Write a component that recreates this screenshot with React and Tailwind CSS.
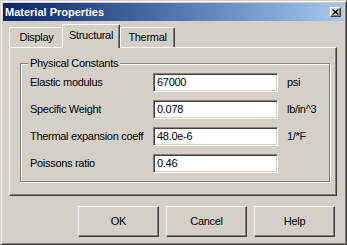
import React from "react";

const raised =
  "border border-t-white border-l-white border-r-[#404040] border-b-[#404040] shadow-[inset_-1px_-1px_#808080]";
const sunken =
  "border border-t-[#808080] border-l-[#808080] border-r-white border-b-white shadow-[inset_1px_1px_#404040,inset_-1px_-1px_#d4d0c8]";

const rows = [
  ["Elastic modulus", "67000", "psi"],
  ["Specific Weight", "0.078", "lb/in^3"],
  ["Thermal expansion coeff", "48.0e-6", "1/*F"],
  ["Poissons ratio", "0.46", ""],
];

export default function App() {
  return (
    <div className="w-[347px] h-[245px] bg-[#d4d0c8] border border-t-[#d4d0c8] border-l-[#d4d0c8] border-r-[#404040] border-b-[#404040] shadow-[inset_1px_1px_#fff,inset_-1px_-1px_#808080] p-[2px] flex flex-col font-['Liberation_Sans',Arial,sans-serif] text-[11px] tracking-[-0.3px] text-black leading-[13px]">
      {/* Title bar */}
      <div className="h-[18px] flex items-center justify-between bg-gradient-to-r from-[#0a246a] to-[#a6caf0] pl-[2px] pr-[3px]">
        <span className="text-white font-bold text-[11px] tracking-[0px]">Material Properties</span>
        <div className={`w-[11px] h-[10px] bg-[#d4d0c8] flex items-center justify-center ${raised}`}>
          <svg width="7" height="6" viewBox="0 0 7 6">
            <path d="M0.5 0.5 L6.5 5.5 M6.5 0.5 L0.5 5.5" stroke="#000" strokeWidth="1.2" />
          </svg>
        </div>
      </div>

      {/* Tabs */}
      <div className="flex items-end h-[23px] mt-[3px] ml-[6px]">
        <div className="w-[55px] h-[20px] flex items-center justify-center border-t border-l border-t-white border-l-white border-r border-r-[#404040] shadow-[inset_-1px_0_#808080] rounded-tl-[2px] rounded-tr-[2px]">
          Display
        </div>
        <div className="relative z-10 -ml-[2px] -mb-[1px] w-[58px] h-[24px] bg-[#d4d0c8] flex items-start justify-center pt-[4px] border-t border-l border-t-white border-l-white border-r border-r-[#404040] shadow-[inset_-1px_0_#808080] rounded-tl-[2px] rounded-tr-[2px]">
          Structural
        </div>
        <div className="w-[55px] h-[20px] flex items-center justify-center border-t border-l border-t-white border-l-white border-r border-r-[#404040] shadow-[inset_-1px_0_#808080] rounded-tl-[2px] rounded-tr-[2px]">
          Thermal
        </div>
      </div>

      {/* Panel */}
      <div className={`ml-[6px] w-[328px] h-[149px] pt-[15px] pl-[10px] ${raised}`}>
        <div className="relative w-[310px] h-[119px] border border-[#808080] shadow-[inset_1px_1px_#fff,1px_1px_#fff] pt-[9px] pl-[9px] flex flex-col gap-[8px]">
          <span className="absolute left-[7px] -top-[7px] px-[2px] bg-[#d4d0c8]">Physical Constants</span>
          {rows.map(([label, value, unit]) => (
            <div key={label} className="flex items-center h-[19px]">
              <span className="w-[123px] whitespace-nowrap">{label}</span>
              <div className={`w-[125px] h-[19px] bg-white flex items-center pl-[3px] ${sunken}`}>{value}</div>
              <span className="ml-[9px]">{unit}</span>
            </div>
          ))}
        </div>
      </div>

      {/* Buttons */}
      <div className="mt-[10px] flex justify-end gap-[7px] pr-[9px]">
        {["OK", "Cancel", "Help"].map((b) => (
          <div key={b} className={`w-[81px] h-[31px] flex items-center justify-center ${raised}`}>
            {b}
          </div>
        ))}
      </div>
    </div>
  );
}
